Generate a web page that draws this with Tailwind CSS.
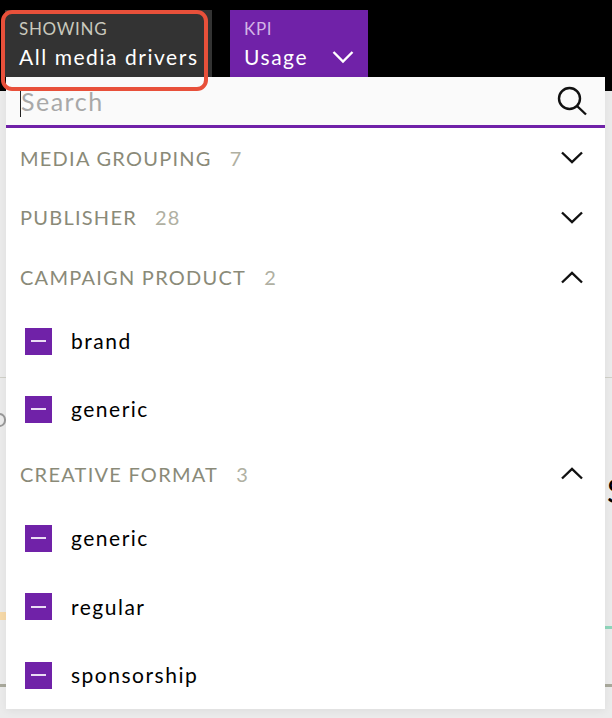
<!DOCTYPE html>
<html lang="en">
<head>
<meta charset="UTF-8">
<title>Media drivers filter</title>
<script src="https://cdn.jsdelivr.net/npm/@tailwindcss/browser@4"></script>
</head>
<body class="font-['Lato',sans-serif]">
<div class="relative w-[612px] h-[718px] overflow-hidden bg-[#ebebeb]">
  <!-- top bar -->
  <div class="h-[91px] bg-black pt-[10px] pl-[5px] flex items-start gap-[18px]">
    <div class="w-[207px] h-[67px] bg-[#333333] pl-[14px] pt-[9px]">
      <div class="text-[17px] leading-[20px] tracking-[0.7px] text-[#c9c9bd]">SHOWING</div>
      <div class="mt-[6px] text-[21px] leading-[24px] tracking-[1.55px] text-white">All media drivers</div>
    </div>
    <div class="w-[138px] h-[67px] bg-[#7022a8] pl-[14px] pt-[9px]">
      <div class="text-[17px] leading-[20px] tracking-[0.7px] text-[#d2b4e6]">KPI</div>
      <div class="mt-[6px] flex items-center justify-between pr-[14px] text-[21px] leading-[24px] tracking-[1.55px] text-white">
        <span>Usage</span>
        <svg width="22" height="14" viewBox="0 0 22 14" fill="none" stroke="white" stroke-width="2.4"><path d="M1.5 2L11 11.5L20.5 2"/></svg>
      </div>
    </div>
  </div>

  <!-- page behind the menu -->
  <div class="absolute left-0 right-0 top-[377px] h-px bg-[#d0d0c8]"></div>
  <div class="absolute left-[-7px] top-[413px] w-[13px] h-[14px] rounded-full border-2 border-[#999999]"></div>
  <div class="absolute left-0 top-[612px] w-[6px] h-[8px] bg-[#f6d9a8]"></div>
  <div class="absolute left-0 top-[684px] w-[6px] h-[3px] bg-[#a9a99c]"></div>
  <div class="absolute left-[605px] top-[626px] w-[7px] h-[3px] bg-[#8fd6bb]"></div>
  <div class="absolute left-[605px] top-[684px] w-[7px] h-[3px] bg-[#a9a99c]"></div>
  <div class="absolute left-[607px] top-[472px] text-[32px] leading-[38px] text-black">S</div>

  <!-- dropdown menu -->
  <div class="absolute left-[6px] top-[77px] w-[599px] h-[632px] bg-white shadow-[0_2px_8px_rgba(0,0,0,0.06)]">
    <div class="h-[51px] bg-[#fafafa] border-b-[3px] border-[#7022a8] pl-[14px] pr-[17px] flex items-center justify-between">
      <div class="flex items-center h-[30px] mt-[2px] border-l border-[#222222] text-[25px] tracking-[1.5px] text-[#a8a8a8]">Search</div>
      <svg width="31" height="31" viewBox="0 0 31 31" fill="none" stroke="#111111" stroke-width="2.4"><circle cx="12.5" cy="12.5" r="10.5"/><path d="M20 20L29 28.5"/></svg>
    </div>

    <div class="flex items-center justify-between h-[59px] pl-[14px] pr-[22px]">
      <div class="text-[20px] tracking-[1.25px] text-[#8a8a78]">MEDIA GROUPING<span class="ml-[18px] text-[#b0b0a2]">7</span></div>
      <svg width="22" height="13" viewBox="0 0 22 13" fill="none" stroke="#111111" stroke-width="2.4"><path d="M1 1.5L11 11L21 1.5"/></svg>
    </div>
    <div class="flex items-center justify-between h-[60px] pl-[14px] pr-[22px]">
      <div class="text-[20px] tracking-[1.25px] text-[#8a8a78]">PUBLISHER<span class="ml-[18px] text-[#b0b0a2]">28</span></div>
      <svg width="22" height="13" viewBox="0 0 22 13" fill="none" stroke="#111111" stroke-width="2.4"><path d="M1 1.5L11 11L21 1.5"/></svg>
    </div>
    <div class="flex items-center justify-between h-[60px] pl-[14px] pr-[22px]">
      <div class="text-[20px] tracking-[1.25px] text-[#8a8a78]">CAMPAIGN PRODUCT<span class="ml-[18px] text-[#b0b0a2]">2</span></div>
      <svg width="22" height="13" viewBox="0 0 22 13" fill="none" stroke="#111111" stroke-width="2.4"><path d="M1 11.5L11 2L21 11.5"/></svg>
    </div>
    <div class="flex items-center h-[68px] pl-[19px] gap-[19px] text-[21px] tracking-[1.5px] text-black">
      <span class="flex items-center justify-center w-[27px] h-[27px] bg-[#7022a8]"><span class="w-[15px] h-[2px] bg-[#eadcf4]"></span></span>brand
    </div>
    <div class="flex items-center h-[68px] pl-[19px] gap-[19px] text-[21px] tracking-[1.5px] text-black">
      <span class="flex items-center justify-center w-[27px] h-[27px] bg-[#7022a8]"><span class="w-[15px] h-[2px] bg-[#eadcf4]"></span></span>generic
    </div>
    <div class="flex items-center justify-between h-[61px] pl-[14px] pr-[22px]">
      <div class="text-[20px] tracking-[1.25px] text-[#8a8a78]">CREATIVE FORMAT<span class="ml-[18px] text-[#b0b0a2]">3</span></div>
      <svg width="22" height="13" viewBox="0 0 22 13" fill="none" stroke="#111111" stroke-width="2.4"><path d="M1 11.5L11 2L21 11.5"/></svg>
    </div>
    <div class="flex items-center h-[68px] pl-[19px] gap-[19px] text-[21px] tracking-[1.5px] text-black">
      <span class="flex items-center justify-center w-[27px] h-[27px] bg-[#7022a8]"><span class="w-[15px] h-[2px] bg-[#eadcf4]"></span></span>generic
    </div>
    <div class="flex items-center h-[69px] pl-[19px] gap-[19px] text-[21px] tracking-[1.5px] text-black">
      <span class="flex items-center justify-center w-[27px] h-[27px] bg-[#7022a8]"><span class="w-[15px] h-[2px] bg-[#eadcf4]"></span></span>regular
    </div>
    <div class="flex items-center h-[68px] pl-[19px] gap-[19px] text-[21px] tracking-[1.5px] text-black">
      <span class="flex items-center justify-center w-[27px] h-[27px] bg-[#7022a8]"><span class="w-[15px] h-[2px] bg-[#eadcf4]"></span></span>sponsorship
    </div>
  </div>

  <!-- red highlight -->
  <div class="absolute left-[1px] top-[10px] w-[207px] h-[81px] rounded-[11px] border-[4px] border-[#e8503a]"></div>
</div>
</body>
</html>
